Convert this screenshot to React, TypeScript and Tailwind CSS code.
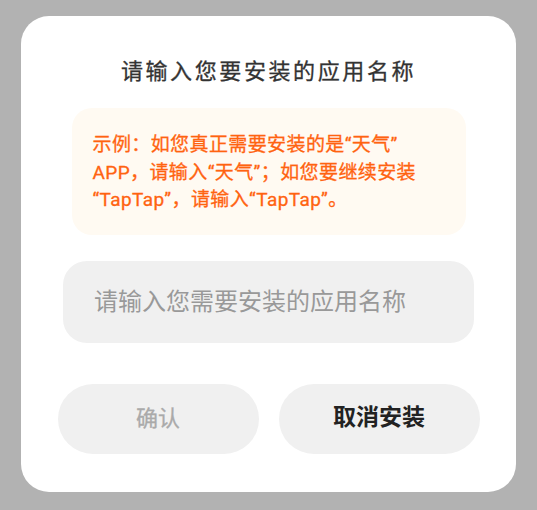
import { useState } from "react";

const FONT = "font-['Roboto','Noto_Sans_CJK_SC',sans-serif]";

// Dialog asking the user to type the app name before an install is confirmed.
export default function App() {
  const [value, setValue] = useState("");

  return (
    <div className={`flex h-[510px] w-full items-start justify-center bg-[#b2b2b2] pt-4 ${FONT}`}>
      <div className="flex h-[476px] w-[495px] flex-col items-center rounded-[28px] bg-white">
        <h1 className="mt-[40px] text-[22px] leading-[32px] font-normal tracking-[2.6px] text-[#333333] [-webkit-text-stroke:0.3px]">
          请输入您要安装的应用名称
        </h1>

        <div className="mt-[20px] w-[394px] rounded-[20px] bg-[#fffaf2] px-[21px] pt-[23px] pb-[21px] text-[19px] leading-[27.5px] font-normal tracking-[0.4px] text-[#ff6310] [-webkit-text-stroke:0.3px]">
          示例：如您真正需要安装的是“天气”
          <br />
          APP，请输入“天气”；如您要继续安装
          <br />
          “TapTap”，请输入“TapTap”。
        </div>

        <input
          value={value}
          onChange={(e) => setValue(e.target.value)}
          placeholder="请输入您需要安装的应用名称"
          className="mt-[26px] h-[82px] w-[411px] rounded-[24px] bg-[#f0f0f0] px-[31px] text-[24px] text-[#333333] placeholder:text-[#999999] focus:outline-none"
        />

        <div className="mt-[41px] flex gap-[20px]">
          <button
            type="button"
            disabled={!value}
            className="h-[70px] w-[201px] rounded-full bg-[#f0f0f0] text-[22px] font-normal text-[#aaaaaa] [-webkit-text-stroke:0.3px]"
          >
            确认
          </button>
          <button
            type="button"
            className="h-[70px] w-[201px] rounded-full bg-[#f0f0f0] text-[23px] font-bold text-[#222222]"
          >
            取消安装
          </button>
        </div>
      </div>
    </div>
  );
}
